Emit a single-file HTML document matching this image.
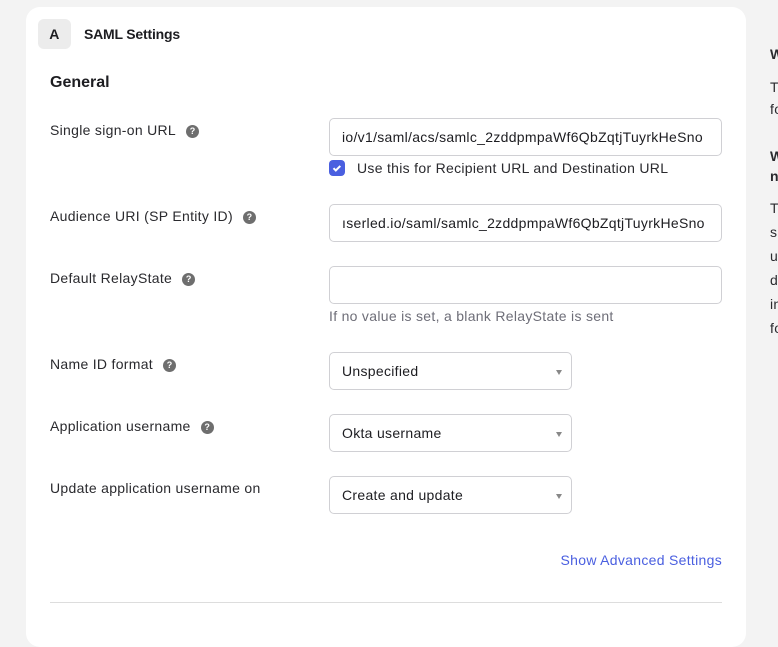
<!DOCTYPE html>
<html><head><style>
body{margin:0;width:778px;height:608px;background:#f3f3f3;font-family:"Liberation Sans",sans-serif;color:#1d1d21;position:relative;overflow:hidden;letter-spacing:0.3px}
.card{position:absolute;left:26px;top:7px;width:720px;height:640px;background:#fff;border-radius:14px}
.a{position:absolute;left:38px;top:19px;width:33px;height:30px;background:#ececec;border-radius:6px;font-weight:bold;font-size:14px;text-align:center;line-height:30px}
.t{position:absolute;font-size:14px;white-space:nowrap}
.lbl{position:absolute;left:50px;font-size:14px;color:#2a2a2e;white-space:nowrap}
.q{display:inline-block;width:13px;height:13px;border-radius:50%;background:#6e6e6e;color:#fff;font-size:9px;font-weight:bold;text-align:center;line-height:13px;margin-left:10px;vertical-align:1px;letter-spacing:0}
.in{position:absolute;left:329px;border:1px solid #d0d0d4;border-radius:5px;font-size:14px;line-height:36px;padding-left:12px;box-sizing:border-box;width:393px;height:38px;overflow:hidden;white-space:nowrap;color:#1d1d21}
.sel{width:243px}
.sel:after{content:"";position:absolute;right:9px;top:17px;border:3.5px solid transparent;border-top:5px solid #888}
.r{position:absolute;left:770px;font-size:14px;color:#2a2a2e}
</style></head><body>
<div class="card"></div>
<div class="a">A</div>
<div class="t" style="left:84px;top:26px;font-weight:bold;font-size:14px;letter-spacing:-0.2px">SAML Settings</div>
<div class="t" style="left:50px;top:74px;font-weight:bold;font-size:16px;letter-spacing:0">General</div>
<div class="lbl" style="top:122px">Single sign-on URL<span class="q">?</span></div>
<div class="in" style="top:118px">io/v1/saml/acs/samlc_2zddpmpaWf6QbZqtjTuyrkHeSno</div>
<div style="position:absolute;left:329px;top:160px;width:16px;height:16px;border-radius:4px;background:#4a5fe0"><svg width="16" height="16"><path d="M4.5 8.2l2.3 2.3 4.5-4.6" stroke="#fff" stroke-width="2" fill="none"/></svg></div>
<div class="t" style="left:357px;top:160px;color:#2a2a2e">Use this for Recipient URL and Destination URL</div>
<div class="lbl" style="top:208px">Audience URI (SP Entity ID)<span class="q">?</span></div>
<div class="in" style="top:204px">ıserled.io/saml/samlc_2zddpmpaWf6QbZqtjTuyrkHeSno</div>
<div class="lbl" style="top:270px">Default RelayState<span class="q">?</span></div>
<div class="in" style="top:266px"></div>
<div class="t" style="left:329px;top:308px;color:#6e6e78">If no value is set, a blank RelayState is sent</div>
<div class="lbl" style="top:356px">Name ID format<span class="q">?</span></div>
<div class="in sel" style="top:352px">Unspecified</div>
<div class="lbl" style="top:418px">Application username<span class="q">?</span></div>
<div class="in sel" style="top:414px">Okta username</div>
<div class="lbl" style="top:480px">Update application username on</div>
<div class="in sel" style="top:476px">Create and update</div>
<div class="t" style="right:56px;top:552px;color:#4a5fe0">Show Advanced Settings</div>
<div style="position:absolute;left:50px;top:602px;width:672px;height:1px;background:#ddd"></div>
<div class="r" style="top:46px;font-weight:bold">W</div>
<div class="r" style="top:79px">T</div>
<div class="r" style="top:101px">fo</div>
<div class="r" style="top:148px;font-weight:bold">W</div>
<div class="r" style="top:168px;font-weight:bold">n</div>
<div class="r" style="top:200px">T</div>
<div class="r" style="top:224px">s</div>
<div class="r" style="top:248px">u</div>
<div class="r" style="top:272px">d</div>
<div class="r" style="top:296px">in</div>
<div class="r" style="top:320px">fo</div>
</body></html>
